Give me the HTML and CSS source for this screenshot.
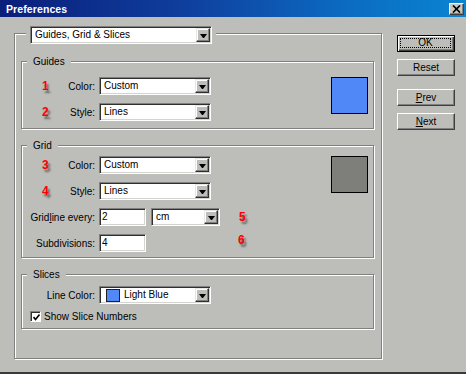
FILE: index.html
```html
<!DOCTYPE html>
<html>
<head>
<meta charset="utf-8">
<title>Preferences</title>
<link rel="stylesheet" href="styles.css">
</head>
<body>
<div class="window">
  <div class="titlebar">
    <span class="title">Preferences</span>
    <span class="close"><svg width="9" height="8" viewBox="0 0 9 8"><path d="M1 0.5 L8 7.5 M8 0.5 L1 7.5" stroke="#000" stroke-width="1.7" fill="none"/></svg></span>
  </div>
  <div class="client">
    <div class="outer">
      <div class="outer-head">
        <div class="select select-wide"><span class="sel-text">Guides, Grid &amp; Slices</span><span class="drop"></span></div>
      </div>

      <div class="group group-guides">
        <div class="group-title">Guides</div>
        <div class="group-body body-guides">
          <div class="rows">
            <div class="row">
              <div class="lbl"><span class="mark">1</span><span>Color:</span></div>
              <div class="select"><span class="sel-text">Custom</span><span class="drop"></span></div>
            </div>
            <div class="row">
              <div class="lbl"><span class="mark">2</span><span>Style:</span></div>
              <div class="select"><span class="sel-text">Lines</span><span class="drop"></span></div>
            </div>
          </div>
          <div class="swatch swatch-blue"></div>
        </div>
      </div>

      <div class="group group-next">
        <div class="group-title">Grid</div>
        <div class="group-body body-grid">
          <div class="rows">
            <div class="row">
              <div class="lbl"><span class="mark">3</span><span>Color:</span></div>
              <div class="select"><span class="sel-text">Custom</span><span class="drop"></span></div>
            </div>
            <div class="row">
              <div class="lbl"><span class="mark">4</span><span>Style:</span></div>
              <div class="select"><span class="sel-text">Lines</span><span class="drop"></span></div>
            </div>
            <div class="row">
              <div class="lbl"><span>Grid<u>l</u>ine every:</span></div>
              <div class="input">2</div>
              <div class="select select-unit"><span class="sel-text">cm</span><span class="drop"></span></div>
              <span class="mark mark-5">5</span>
            </div>
            <div class="row">
              <div class="lbl"><span>Subdivisions:</span></div>
              <div class="input">4</div>
              <span class="mark mark-6">6</span>
            </div>
          </div>
          <div class="swatch swatch-gray"></div>
        </div>
      </div>

      <div class="group group-next">
        <div class="group-title">Slices</div>
        <div class="group-body body-slices">
          <div class="rows rows-slices">
            <div class="row">
              <div class="lbl"><span>Line Color:</span></div>
              <div class="select"><span class="chip"></span><span class="sel-text sel-chip">Light Blue</span><span class="drop"></span></div>
            </div>
            <div class="check-row">
              <span class="checkbox"><svg width="7" height="7" viewBox="0 0 7 7"><path d="M0.5 3 L2.5 5.5 L6.5 0.5" stroke="#000" stroke-width="1.6" fill="none"/></svg></span>
              <span>Show Slice Numbers</span>
            </div>
          </div>
        </div>
      </div>
    </div>

    <div class="buttons">
      <div class="btn btn-default"><span class="focus">OK</span></div>
      <div class="btn btn-reset">Reset</div>
      <div class="btn btn-prev"><span><u>P</u>rev</span></div>
      <div class="btn btn-next"><span><u>N</u>ext</span></div>
    </div>
  </div>
</div>
</body>
</html>
```

FILE: styles.css
```css
* { box-sizing: border-box; }
html, body { margin: 0; padding: 0; }
body {
  width: 466px;
  height: 374px;
  overflow: hidden;
  background: #bdbeba;
  font-family: "Liberation Sans", Arial, sans-serif;
  font-size: 10px;
  color: #000;
}
.window {
  height: 374px;
  border-bottom: 2px solid #3a3a3a;
  display: flex;
  flex-direction: column;
}
.titlebar {
  height: 17px;
  flex: none;
  background: linear-gradient(to right, #0a1e7a 0%, #0f3f9e 40%, #0b6cc2 75%, #0a84d2 100%);
  display: flex;
  align-items: center;
  justify-content: space-between;
  padding: 0 2px 0 6px;
}
.title {
  color: #fff;
  font-weight: bold;
  font-size: 10.5px;
  letter-spacing: 0.1px;
}
.close {
  width: 15px;
  height: 12px;
  background: #c6c6c2;
  border: 1px solid;
  border-color: #fff #404040 #404040 #fff;
  box-shadow: inset -1px -1px #808080;
  display: flex;
  align-items: center;
  justify-content: center;
}
.client {
  display: flex;
  align-items: flex-start;
}
.outer {
  margin: 16px 0 0 14px;
  width: 368px;
  border: 1px solid #808080;
  box-shadow: inset 1px 1px #fff, 1px 1px #fff;
  padding: 0 7px 29px 6px;
}
.outer-head {
  margin: -8px 0 0 5px;
  padding: 0 4px;
  width: fit-content;
  background: #bdbeba;
}
.group {
  border: 1px solid #808080;
  box-shadow: inset 1px 1px #fff, 1px 1px #fff;
}
.group-guides { margin-top: 17px; }
.group-next { margin-top: 16px; }
.group-title {
  margin: -7px 0 0 5px;
  padding: 0 6px;
  width: fit-content;
  height: 13px;
  line-height: 13px;
  background: #bdbeba;
}
.group-body {
  display: flex;
  align-items: flex-start;
  justify-content: space-between;
  padding-right: 5px;
}
.body-guides { padding-top: 9px; padding-bottom: 7px; }
.body-grid { padding-top: 4px; padding-bottom: 5px; }
.body-slices { padding-top: 5px; padding-bottom: 5px; }
.rows {
  display: flex;
  flex-direction: column;
  gap: 8px;
}
.rows-slices { gap: 6px; }
.row {
  display: flex;
  align-items: center;
  height: 18px;
}
.lbl {
  width: 73px;
  height: 18px;
  margin-right: 4px;
  display: flex;
  align-items: center;
  justify-content: flex-end;
  white-space: nowrap;
}
.mark {
  color: #ff0000;
  font-weight: bold;
  font-size: 12px;
  line-height: 12px;
  text-shadow: 2px 3px 2px rgba(70, 70, 70, 0.75);
}
.lbl .mark { margin: 0 auto 0 20px; }
.mark-5 { margin-left: 19px; }
.mark-6 { margin-left: 92px; align-self: flex-start; }
.select {
  display: flex;
  align-items: center;
  width: 112px;
  height: 18px;
  background: #fff;
  border: 1px solid;
  border-color: #808080 #fff #fff #808080;
  box-shadow: inset 1px 1px #303030, inset -1px -1px #d4d4d0;
  padding: 1px;
}
.select-wide { width: 182px; }
.select-unit { width: 69px; margin-left: 5px; }
.sel-text {
  flex: 1;
  padding-left: 3px;
  line-height: 14px;
  white-space: nowrap;
  overflow: hidden;
}
.sel-chip { padding-left: 4px; }
.chip {
  width: 14px;
  height: 13px;
  margin-left: 5px;
  background: #5088f8;
  border: 1px solid #202020;
}
.drop {
  flex: none;
  width: 14px;
  height: 14px;
  background: #bdbeba;
  border: 1px solid;
  border-color: #e6e6e2 #303030 #303030 #e6e6e2;
  box-shadow: inset -1px -1px #808080, inset 1px 1px #fff;
  display: flex;
  align-items: center;
  justify-content: center;
}
.drop::after {
  content: "";
  width: 1px;
  height: 0;
  border-left: 3px solid transparent;
  border-right: 3px solid transparent;
  border-top: 4px solid #000;
  margin-top: 1px;
}
.input {
  width: 47px;
  height: 18px;
  background: #fff;
  border: 1px solid;
  border-color: #808080 #fff #fff #808080;
  box-shadow: inset 1px 1px #303030, inset -1px -1px #d4d4d0;
  padding: 1px 1px 1px 2px;
  line-height: 14px;
}
.swatch {
  width: 37px;
  height: 37px;
  border: 1px solid #000;
}
.swatch-blue { background: #5088f8; }
.swatch-gray { background: #7e7f7b; }
.check-row {
  display: flex;
  align-items: center;
  gap: 3px;
  height: 13px;
  margin-left: 8px;
}
.checkbox {
  width: 11px;
  height: 11px;
  background: #fff;
  border: 1px solid;
  border-color: #808080 #fff #fff #808080;
  box-shadow: inset 1px 1px #303030;
  display: flex;
  align-items: center;
  justify-content: center;
  padding: 1px 0 0 1px;
}
.buttons {
  margin: 18px 0 0 15px;
  width: 58px;
  display: flex;
  flex-direction: column;
}
.btn {
  width: 58px;
  height: 17px;
  background: #bdbeba;
  border: 1px solid;
  border-color: #fff #404040 #404040 #fff;
  box-shadow: inset -1px -1px #808080;
  display: flex;
  align-items: center;
  justify-content: center;
  line-height: 12px;
}
.btn-default {
  border: 1px solid #000;
  box-shadow: inset 1px 1px #fff, inset -1px -1px #404040, inset -2px -2px #808080;
  padding: 2px 3px 3px 2px;
}
.focus {
  flex: 1;
  height: 100%;
  border: 1px dotted #000;
  display: flex;
  align-items: center;
  justify-content: center;
}
.btn-reset { margin-top: 7px; }
.btn-prev { margin-top: 13px; }
.btn-next { margin-top: 7px; }
```
